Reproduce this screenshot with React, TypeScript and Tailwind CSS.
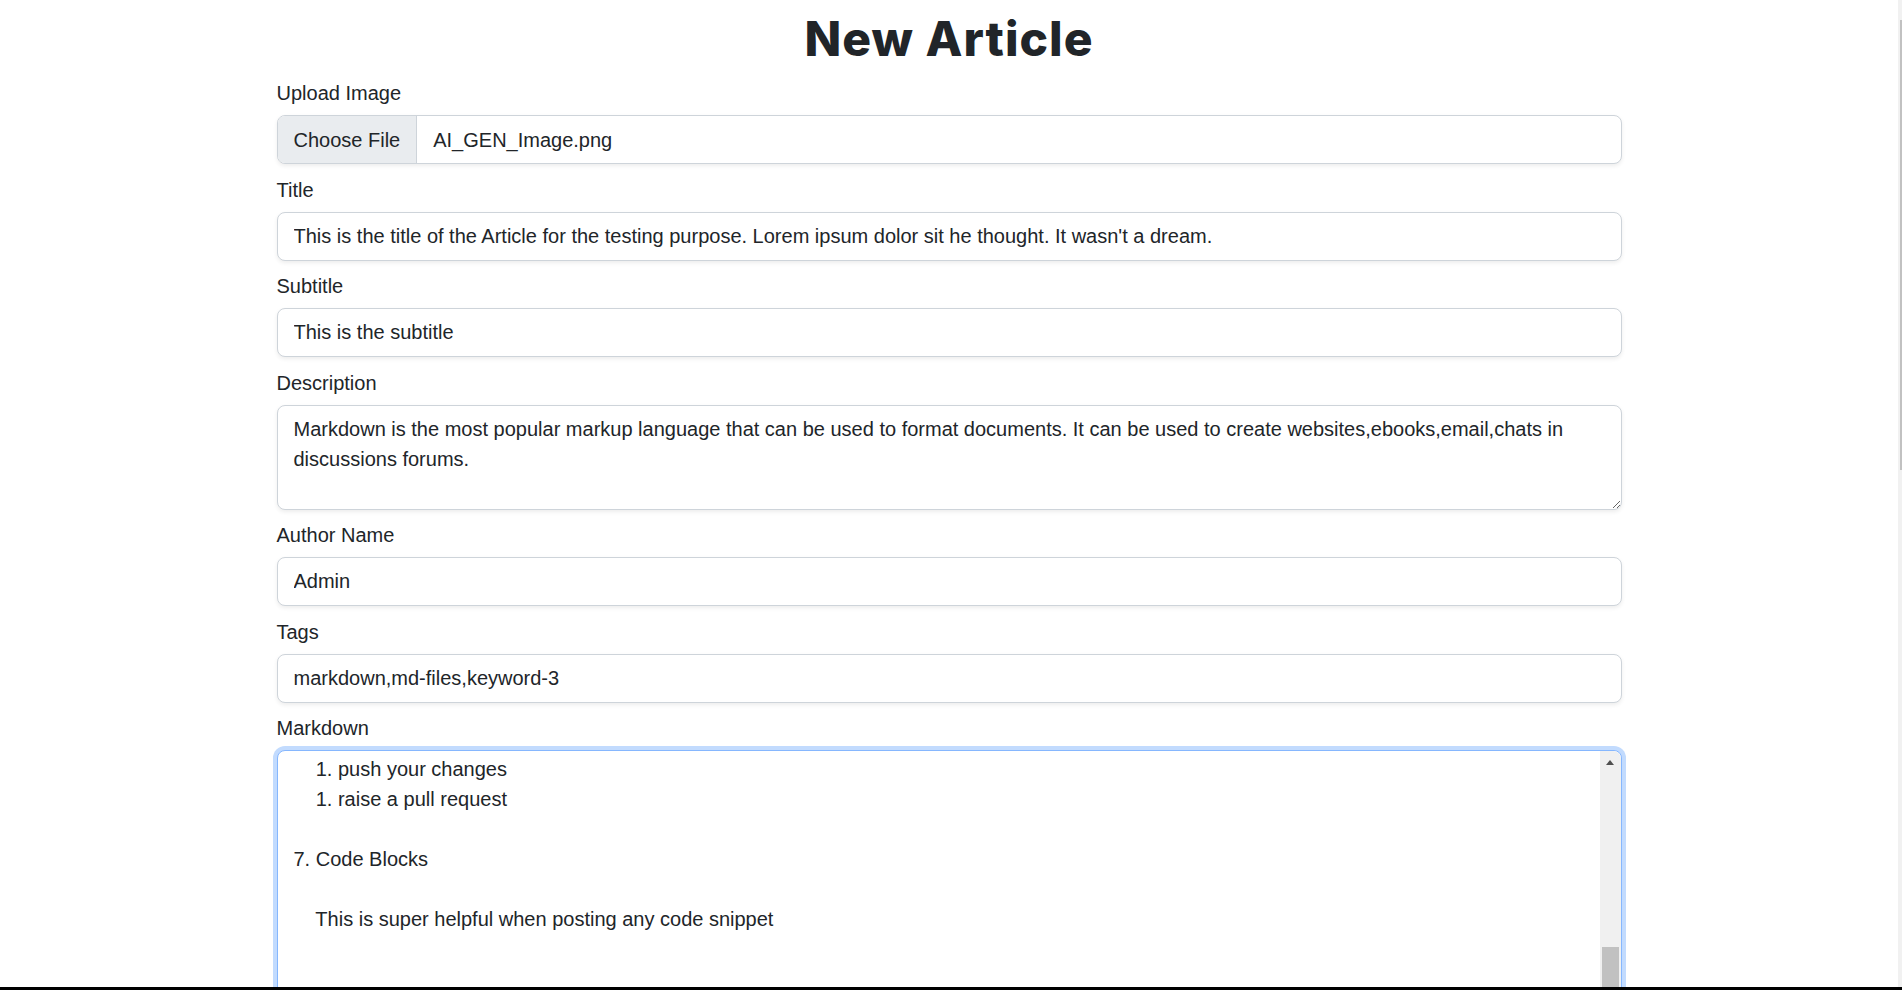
import React from 'react'

const fieldClass =
  'block w-full h-[49px] px-4 py-2 text-[20px] leading-[30px] text-[#212529] bg-white border border-[#ced4da] rounded-lg shadow-[0_2px_4px_rgba(0,0,0,0.075)] outline-none'

const labelClass = 'block text-[20px] leading-[30px] mb-[7px] text-[#212529]'

const markdownText = [
  '    1. push your changes',
  '    1. raise a pull request',
  '',
  '7. Code Blocks',
  '',
  '    This is super helpful when posting any code snippet',
  '',
  '',
  '',
  '',
].join('\n')

function Field({ label, value }: { label: string; value: string }) {
  return (
    <div>
      <label className={labelClass}>{label}</label>
      <input className={fieldClass} defaultValue={value} />
    </div>
  )
}

export default function App() {
  return (
    <div className="h-[990px] w-full overflow-hidden flex flex-col bg-white text-[#212529] font-['Liberation_Sans',Arial,sans-serif]">
      <div className="flex flex-1 min-h-0">
        <main className="flex-1 min-w-0 overflow-hidden">
          <div className="w-[1345px] mx-auto">
            <h1 className="mt-[10px] mb-[10px] text-center text-[48px] leading-[58px] font-extrabold tracking-[1px] font-['Inter',sans-serif] text-[#212529]">
              New Article
            </h1>

            <form className="flex flex-col gap-[10.5px]">
              {/* Upload */}
              <div>
                <label className={labelClass}>Upload Image</label>
                <div className="flex h-[49px] w-full overflow-hidden bg-white border border-[#ced4da] rounded-lg shadow-[0_2px_4px_rgba(0,0,0,0.075)] text-[20px] leading-[30px]">
                  <span className="flex items-center px-4 bg-[#e9ecef] border-r border-[#ced4da]">
                    Choose File
                  </span>
                  <span className="flex items-center px-4">AI_GEN_Image.png</span>
                </div>
              </div>

              <Field
                label="Title"
                value="This is the title of the Article for the testing purpose. Lorem ipsum dolor sit he thought. It wasn't a dream."
              />
              <Field label="Subtitle" value="This is the subtitle" />

              {/* Description */}
              <div>
                <label className={labelClass}>Description</label>
                <textarea
                  className="block w-full h-[105px] px-4 py-2 text-[20px] leading-[30px] text-[#212529] bg-white border border-[#ced4da] rounded-lg shadow-[0_2px_4px_rgba(0,0,0,0.075)] outline-none resize-y"
                  defaultValue="Markdown is the most popular markup language that can be used to format documents. It can be used to create websites,ebooks,email,chats in discussions forums."
                />
              </div>

              <Field label="Author Name" value="Admin" />
              <Field label="Tags" value="markdown,md-files,keyword-3" />

              {/* Markdown */}
              <div>
                <label className={labelClass}>Markdown</label>
                <div className="relative">
                  <textarea
                    className="block w-full h-[600px] pl-4 pr-[40px] pt-[3px] pb-2 text-[20px] leading-[30px] text-[#212529] bg-white border border-[#86b7fe] rounded-lg shadow-[0_0_0_4px_rgba(13,110,253,0.25)] outline-none resize-none overflow-hidden whitespace-pre"
                    defaultValue={markdownText}
                  />
                  {/* textarea scrollbar */}
                  <div className="absolute top-[1px] right-[1px] bottom-[1px] w-[21px] bg-[#f0f0f0] rounded-tr-lg">
                    <div className="flex justify-center pt-[9px]">
                      <svg width="8" height="5" viewBox="0 0 8 5">
                        <polygon points="4,0 8,5 0,5" fill="#505050" />
                      </svg>
                    </div>
                    <div className="absolute top-[196px] left-[2px] w-[17px] h-[220px] bg-[#c1c1c1]" />
                  </div>
                </div>
              </div>
            </form>
          </div>
        </main>

        {/* page scrollbar */}
        <div className="w-[4px] shrink-0 bg-[#f1f1f1]">
          <div className="mt-[20px] ml-[2px] w-[2px] h-[450px] bg-[#c1c1c1]" />
        </div>
      </div>
      <div className="h-[3px] shrink-0 bg-black" />
    </div>
  )
}
